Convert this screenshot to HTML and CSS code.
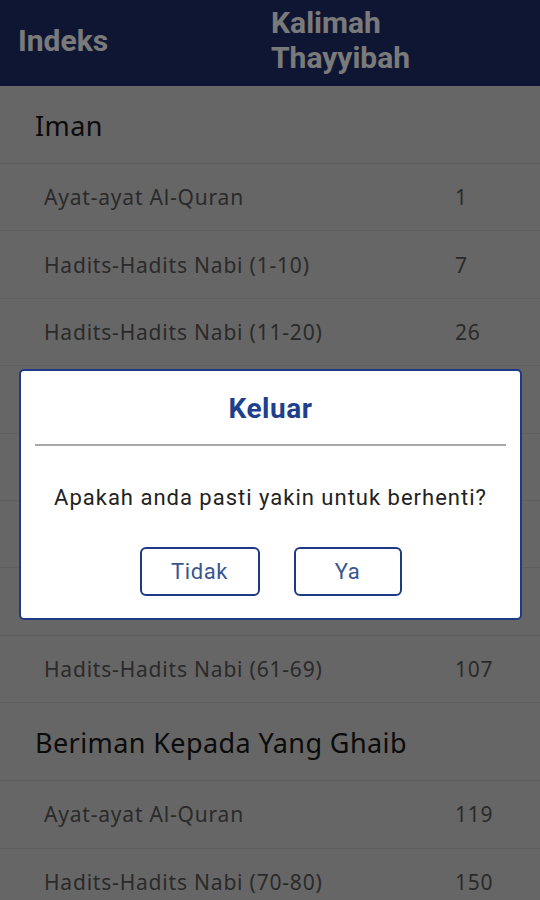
FILE: index.html
```html
<!DOCTYPE html>
<html lang="id">
<head>
  <meta charset="UTF-8">
  <title>Kalimah Thayyibah</title>
  <link rel="stylesheet" href="styles.css">
</head>
<body>
  <div class="header">
    <div class="tab">Indeks</div>
    <div class="tab title">Kalimah<br>Thayyibah</div>
  </div>

  <div class="list">
    <div class="section">Iman</div>
    <div class="row"><span class="label">Ayat-ayat Al-Quran</span><span class="num">1</span></div>
    <div class="row"><span class="label">Hadits-Hadits Nabi (1-10)</span><span class="num">7</span></div>
    <div class="row"><span class="label">Hadits-Hadits Nabi (11-20)</span><span class="num">26</span></div>
    <div class="row"><span class="label">Hadits-Hadits Nabi (21-30)</span><span class="num">45</span></div>
    <div class="row"><span class="label">Hadits-Hadits Nabi (31-40)</span><span class="num">62</span></div>
    <div class="row"><span class="label">Hadits-Hadits Nabi (41-50)</span><span class="num">77</span></div>
    <div class="row"><span class="label">Hadits-Hadits Nabi (51-60)</span><span class="num">92</span></div>
    <div class="row"><span class="label">Hadits-Hadits Nabi (61-69)</span><span class="num">107</span></div>

    <div class="section">Beriman Kepada Yang Ghaib</div>
    <div class="row"><span class="label">Ayat-ayat Al-Quran</span><span class="num">119</span></div>
    <div class="row"><span class="label">Hadits-Hadits Nabi (70-80)</span><span class="num">150</span></div>
  </div>

  <div id="overlay">
    <div class="dialog">
      <div class="dialogTitle">Keluar</div>
      <div class="dialogLine"></div>
      <div class="dialogText">Apakah anda pasti yakin untuk berhenti?</div>
      <div class="buttons">
        <button class="btnNo">Tidak</button>
        <button class="btnYes">Ya</button>
      </div>
    </div>
  </div>
</body>
</html>
```

FILE: styles.css
```css
html, body {
  margin: 0;
  padding: 0;
  height: 100%;
  overflow: hidden;
  background: #cccccc;
  font-family: "Noto Sans", sans-serif;
}

/* ─────────── top bar ─────────── */
.header {
  height: 86px;
  background: #1f2c66;
  display: flex;
  align-items: center;
  color: #f4f4f4;
  font-family: Roboto, sans-serif;
  font-weight: bold;
  font-size: 30px;
}
.header .tab {
  padding-left: 18px;
  width: 235px;
  line-height: 35px;
  padding-bottom: 5px;
}
.header .tab:first-child {
  width: 253px;
}
.header .title {
  padding-left: 0;
  padding-bottom: 6px;
}

/* ─────────── index list ─────────── */
.section {
  height: 77px;
  line-height: 80px;
  padding-left: 35px;
  font-size: 27px;
  letter-spacing: 0.4px;
  color: #161616;
  border-bottom: 1px solid #bcbcbc;
}
.row {
  display: flex;
  align-items: center;
  height: 66.4px;
  padding-left: 44px;
  font-size: 21px;
  letter-spacing: 0.8px;
  color: #555;
  border-bottom: 1px solid #bcbcbc;
}
.row .label {
  width: 411px;
}

/* ─────────── exit dialog ─────────── */
#overlay {
  position: fixed;
  top: 0;
  left: 0;
  width: 100%;
  height: 100%;
  box-sizing: border-box;
  padding-top: 89px;
  background: rgba(0,0,0,0.5);
  display: flex;
  align-items: center;
  justify-content: center;
}
.dialog {
  width: 503px;
  box-sizing: border-box;
  background: #fff;
  border: 2px solid #1f3a85;
  border-radius: 5px;
  padding: 0 0 22px;
  text-align: center;
  font-family: Roboto, sans-serif;
  margin-left: 1px;
}
.dialogTitle {
  margin-top: 20px;
  line-height: 36px;
  font-size: 28px;
  letter-spacing: 0.5px;
  font-weight: bold;
  color: #1d3f8c;
}
.dialogLine {
  height: 2px;
  margin: 17px 14px 0;
  background: #a8a8a8;
}
.dialogText {
  margin-top: 38px;
  line-height: 28px;
  font-size: 22px;
  letter-spacing: 1px;
  color: #222;
}
.buttons {
  display: flex;
  justify-content: center;
  gap: 34px;
  margin-top: 35px;
}
.buttons button {
  height: 49px;
  border: 2px solid #1f3a85;
  border-radius: 6px;
  background: #fff;
  color: #3a5590;
  font-family: Roboto, sans-serif;
  font-size: 22px;
  letter-spacing: 0.6px;
}
.btnNo {
  width: 120px;
}
.btnYes {
  width: 108px;
}
```
